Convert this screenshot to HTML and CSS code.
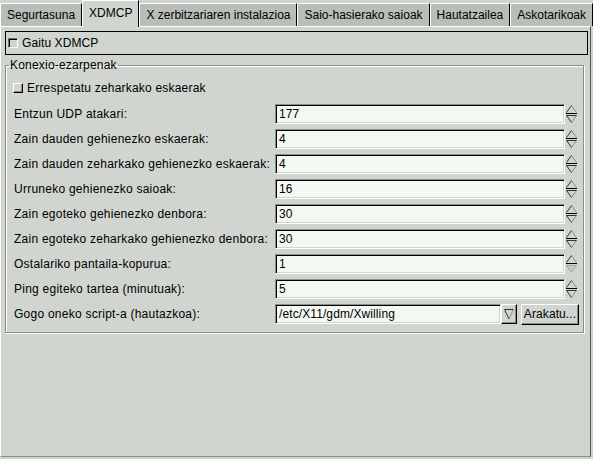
FILE: index.html
```html
<!DOCTYPE html>
<html>
<head>
<meta charset="utf-8">
<link rel="stylesheet" href="styles.css">
</head>
<body>
<div class="tabs">
  <div class="tab">Segurtasuna</div>
  <div class="tab active">XDMCP</div>
  <div class="tab">X zerbitzariaren instalazioa</div>
  <div class="tab">Saio-hasierako saioak</div>
  <div class="tab">Hautatzailea</div>
  <div class="tab">Askotarikoak</div>
</div>
<div class="panel">
  <div class="enable"><span class="check sunken"></span><span>Gaitu XDMCP</span></div>
  <fieldset class="group">
    <legend>Konexio-ezarpenak</legend>
    <div class="group-body">
      <div class="check-row"><span class="check raised"></span><span>Errespetatu zeharkako eskaerak</span></div>
      <div class="rows">
        <div class="row"><span class="label">Entzun UDP atakari:</span><span class="entry">177</span><svg class="spin" width="13" height="20" viewBox="0 0 13 20"><path d="M6.5 1.5 L11.5 8.5" stroke="#8a8e89" fill="none"/><path d="M6.5 1.5 L1.5 8.5" stroke="#333" fill="none"/><path d="M1 9.5 H12" stroke="#000"/><path d="M11.5 11.5 L6.5 18.5" stroke="#8a8e89" fill="none"/><path d="M1.5 11.5 H11.5 M1.5 11.5 L6.5 18.5" stroke="#333" fill="none"/></svg></div>
        <div class="row"><span class="label">Zain dauden gehienezko eskaerak:</span><span class="entry">4</span><svg class="spin" width="13" height="20" viewBox="0 0 13 20"><path d="M6.5 1.5 L11.5 8.5" stroke="#8a8e89" fill="none"/><path d="M6.5 1.5 L1.5 8.5" stroke="#333" fill="none"/><path d="M1 9.5 H12" stroke="#000"/><path d="M11.5 11.5 L6.5 18.5" stroke="#8a8e89" fill="none"/><path d="M1.5 11.5 H11.5 M1.5 11.5 L6.5 18.5" stroke="#333" fill="none"/></svg></div>
        <div class="row"><span class="label">Zain dauden zeharkako gehienezko eskaerak:</span><span class="entry">4</span><svg class="spin" width="13" height="20" viewBox="0 0 13 20"><path d="M6.5 1.5 L11.5 8.5" stroke="#8a8e89" fill="none"/><path d="M6.5 1.5 L1.5 8.5" stroke="#333" fill="none"/><path d="M1 9.5 H12" stroke="#000"/><path d="M11.5 11.5 L6.5 18.5" stroke="#8a8e89" fill="none"/><path d="M1.5 11.5 H11.5 M1.5 11.5 L6.5 18.5" stroke="#333" fill="none"/></svg></div>
        <div class="row"><span class="label">Urruneko gehienezko saioak:</span><span class="entry">16</span><svg class="spin" width="13" height="20" viewBox="0 0 13 20"><path d="M6.5 1.5 L11.5 8.5" stroke="#8a8e89" fill="none"/><path d="M6.5 1.5 L1.5 8.5" stroke="#333" fill="none"/><path d="M1 9.5 H12" stroke="#000"/><path d="M11.5 11.5 L6.5 18.5" stroke="#8a8e89" fill="none"/><path d="M1.5 11.5 H11.5 M1.5 11.5 L6.5 18.5" stroke="#333" fill="none"/></svg></div>
        <div class="row"><span class="label">Zain egoteko gehienezko denbora:</span><span class="entry">30</span><svg class="spin" width="13" height="20" viewBox="0 0 13 20"><path d="M6.5 1.5 L11.5 8.5" stroke="#8a8e89" fill="none"/><path d="M6.5 1.5 L1.5 8.5" stroke="#333" fill="none"/><path d="M1 9.5 H12" stroke="#000"/><path d="M11.5 11.5 L6.5 18.5" stroke="#8a8e89" fill="none"/><path d="M1.5 11.5 H11.5 M1.5 11.5 L6.5 18.5" stroke="#333" fill="none"/></svg></div>
        <div class="row"><span class="label">Zain egoteko zeharkako gehienezko denbora:</span><span class="entry">30</span><svg class="spin" width="13" height="20" viewBox="0 0 13 20"><path d="M6.5 1.5 L11.5 8.5" stroke="#8a8e89" fill="none"/><path d="M6.5 1.5 L1.5 8.5" stroke="#333" fill="none"/><path d="M1 9.5 H12" stroke="#000"/><path d="M11.5 11.5 L6.5 18.5" stroke="#8a8e89" fill="none"/><path d="M1.5 11.5 H11.5 M1.5 11.5 L6.5 18.5" stroke="#333" fill="none"/></svg></div>
        <div class="row"><span class="label">Ostalariko pantaila-kopurua:</span><span class="entry">1</span><svg class="spin" width="13" height="20" viewBox="0 0 13 20"><path d="M6.5 1.5 L11.5 8.5" stroke="#8a8e89" fill="none"/><path d="M6.5 1.5 L1.5 8.5" stroke="#333" fill="none"/><path d="M1 9.5 H12" stroke="#000"/><path d="M1.5 11.5 H11.5 L6.5 18.5 Z" stroke="#a3a7a2" fill="#c4c9c3"/></svg></div>
        <div class="row"><span class="label">Ping egiteko tartea (minutuak):</span><span class="entry">5</span><svg class="spin" width="13" height="20" viewBox="0 0 13 20"><path d="M6.5 1.5 L11.5 8.5" stroke="#8a8e89" fill="none"/><path d="M6.5 1.5 L1.5 8.5" stroke="#333" fill="none"/><path d="M1 9.5 H12" stroke="#000"/><path d="M11.5 11.5 L6.5 18.5" stroke="#8a8e89" fill="none"/><path d="M1.5 11.5 H11.5 M1.5 11.5 L6.5 18.5" stroke="#333" fill="none"/></svg></div>
        <div class="row"><span class="label">Gogo oneko script-a (hautazkoa):</span><span class="entry combo">/etc/X11/gdm/Xwilling</span><span class="drop"><svg width="12" height="14" viewBox="0 0 12 14"><path d="M10.5 2.5 L6 12" stroke="#8a8e89" fill="none"/><path d="M1.5 2.5 H10.5 M1.5 2.5 L6 12" stroke="#333" fill="none"/></svg></span><span class="btn">Arakatu...</span></div>
      </div>
    </div>
  </fieldset>
</div>
</body>
</html>
```
FILE: styles.css
```css
html, body {
  margin: 0;
  padding: 0;
}
body {
  background: #d0d5cf;
  font: 12px "Liberation Sans", Arial, sans-serif;
  color: #000;
  width: 593px;
  height: 459px;
  overflow: hidden;
}
.tabs {
  display: flex;
  align-items: flex-start;
  height: 26px;
  white-space: nowrap;
}
.tab {
  box-sizing: border-box;
  margin-top: 3px;
  height: 23px;
  padding: 2px 6px 0;
  line-height: 18px;
  background: #babeb9;
  border-top: 1px solid #fff;
  border-left: 1px solid #fff;
  border-right: 1px solid #000;
  flex: none;
}
.tab.active {
  margin-top: 0;
  height: 27px;
  padding-top: 3px;
  background: #d0d5cf;
  position: relative;
  z-index: 1;
}
.panel {
  box-sizing: border-box;
  width: 591px;
  height: 431px;
  border-top: 1px solid #fff;
  border-left: 1px solid #fff;
  border-right: 1px solid #555;
  border-bottom: 1px solid #8a8e89;
  padding: 4px 0 0 4px;
}
.enable {
  box-sizing: border-box;
  height: 24px;
  margin-right: 2px;
  border: 1px solid #000;
  display: flex;
  align-items: center;
  gap: 4px;
  padding-left: 2px;
  letter-spacing: 0.1px;
}
.check {
  box-sizing: border-box;
  width: 10px;
  height: 10px;
  flex: none;
}
.check.sunken {
  border-top: 1px solid #6a6e69;
  border-left: 1px solid #6a6e69;
  border-right: 1px solid #fff;
  border-bottom: 1px solid #fff;
  box-shadow: inset 1px 1px 0 #000;
  background: #d0d5cf;
}
.check.raised {
  border-top: 1px solid #fff;
  border-left: 1px solid #fff;
  border-right: 1px solid #000;
  border-bottom: 1px solid #000;
  box-shadow: inset -1px -1px 0 #8a8e89;
  background: #d0d5cf;
}
.group {
  margin: 3px 6px 0 0;
  padding: 0;
  min-width: 0;
  border: 1px solid #8a8e89;
  box-shadow: inset 1px 1px 0 #fff, 1px 1px 0 #fff;
}
.group legend {
  margin-left: 3px;
  padding: 0 1px;
  line-height: 14px;
  letter-spacing: 0.2px;
}
.group-body {
  padding: 6px 4px 8px 7px;
  letter-spacing: 0.2px;
}
.check-row {
  display: flex;
  align-items: center;
  gap: 4px;
  height: 20px;
}
.rows {
  display: flex;
  flex-direction: column;
  gap: 5px;
  margin-top: 6px;
}
.row {
  display: flex;
  align-items: center;
  height: 20px;
  padding-left: 1px;
}
.label {
  width: 261px;
  flex: none;
  white-space: nowrap;
  letter-spacing: 0.25px;
}
.entry {
  box-sizing: border-box;
  width: 290px;
  height: 20px;
  flex: none;
  background: #f3f8f3;
  border-top: 1px solid #8a8e89;
  border-left: 1px solid #8a8e89;
  border-right: 1px solid #fff;
  border-bottom: 1px solid #fff;
  box-shadow: inset 1px 1px 0 #000, inset -1px -1px 0 #d0d5cf;
  padding-left: 3px;
  line-height: 18px;
  letter-spacing: 0.1px;
}
.entry.combo {
  width: 226px;
}
.spin {
  display: block;
  flex: none;
}
.drop {
  box-sizing: border-box;
  width: 16px;
  height: 20px;
  flex: none;
  display: flex;
  align-items: center;
  justify-content: center;
  border-top: 1px solid #fff;
  border-left: 1px solid #fff;
  border-right: 1px solid #000;
  border-bottom: 1px solid #000;
  box-shadow: inset -1px -1px 0 #8a8e89;
}
.drop svg {
  display: block;
}
.btn {
  box-sizing: border-box;
  width: 58px;
  height: 21px;
  margin-left: 4px;
  flex: none;
  text-align: center;
  line-height: 18px;
  letter-spacing: 0.1px;
  border-top: 1px solid #fff;
  border-left: 1px solid #fff;
  border-right: 1px solid #000;
  border-bottom: 1px solid #000;
  box-shadow: inset -1px -1px 0 #8a8e89;
}
```
